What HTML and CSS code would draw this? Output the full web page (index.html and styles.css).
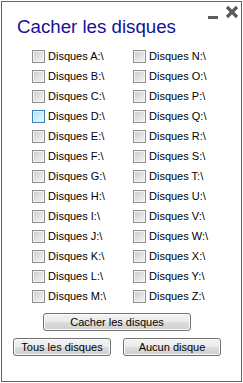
FILE: index.html
```html
<!DOCTYPE html>
<html lang="fr">
<head>
    <meta charset="UTF-8">
    <meta name="viewport" content="width=device-width, initial-scale=1.0">
    <title>Cacher les disques</title>
    <link rel="stylesheet" href="styles.css">
</head>
<body>
    <div class="window">
        <!-- Window controls -->
        <svg class="controls" width="34" height="16" viewBox="0 0 34 16">
            <rect x="3" y="11" width="10" height="3" fill="#5c5c5c"/>
            <path d="M22 2 L32 12 M32 2 L22 12" stroke="#5c5c5c" stroke-width="3.2"/>
        </svg>

        <h1 class="title">Cacher les disques</h1>

        <div class="drives">
            <label class="drive"><input type="checkbox"> Disques A:\</label>
            <label class="drive"><input type="checkbox"> Disques N:\</label>
            <label class="drive"><input type="checkbox"> Disques B:\</label>
            <label class="drive"><input type="checkbox"> Disques O:\</label>
            <label class="drive"><input type="checkbox"> Disques C:\</label>
            <label class="drive"><input type="checkbox"> Disques P:\</label>
            <label class="drive"><input type="checkbox" class="hover"> Disques D:\</label>
            <label class="drive"><input type="checkbox"> Disques Q:\</label>
            <label class="drive"><input type="checkbox"> Disques E:\</label>
            <label class="drive"><input type="checkbox"> Disques R:\</label>
            <label class="drive"><input type="checkbox"> Disques F:\</label>
            <label class="drive"><input type="checkbox"> Disques S:\</label>
            <label class="drive"><input type="checkbox"> Disques G:\</label>
            <label class="drive"><input type="checkbox"> Disques T:\</label>
            <label class="drive"><input type="checkbox"> Disques H:\</label>
            <label class="drive"><input type="checkbox"> Disques U:\</label>
            <label class="drive"><input type="checkbox"> Disques I:\</label>
            <label class="drive"><input type="checkbox"> Disques V:\</label>
            <label class="drive"><input type="checkbox"> Disques J:\</label>
            <label class="drive"><input type="checkbox"> Disques W:\</label>
            <label class="drive"><input type="checkbox"> Disques K:\</label>
            <label class="drive"><input type="checkbox"> Disques X:\</label>
            <label class="drive"><input type="checkbox"> Disques L:\</label>
            <label class="drive"><input type="checkbox"> Disques Y:\</label>
            <label class="drive"><input type="checkbox"> Disques M:\</label>
            <label class="drive"><input type="checkbox"> Disques Z:\</label>
        </div>

        <div class="actions">
            <button class="btn btn-wide">Cacher les disques</button>
            <div class="btn-row">
                <button class="btn">Tous les disques</button>
                <button class="btn">Aucun disque</button>
            </div>
        </div>
    </div>
</body>
</html>
```

FILE: styles.css
```css
body {
    margin: 0;
    background: #fff;
    font-family: "Liberation Sans", Arial, sans-serif;
}
.window {
    position: relative;
    box-sizing: border-box;
    width: 241px;
    height: 381px;
    margin: 1px 0 0 1px;
    border: 1px solid #646464;
    background: #fff;
    padding-top: 14px;
}
.controls {
    position: absolute;
    top: 3px;
    right: 2px;
}
.title {
    margin: 0 0 8px 15px;
    font-size: 18.7px;
    line-height: 22px;
    font-weight: normal;
    color: #12129a;
}
.drives {
    display: grid;
    grid-template-columns: 101px 101px;
    padding-left: 30px;
}
.drive {
    display: flex;
    align-items: center;
    height: 20px;
    font-size: 11px;
    color: #000;
    white-space: nowrap;
}
.drive input {
    appearance: none;
    -webkit-appearance: none;
    box-sizing: border-box;
    width: 13px;
    height: 13px;
    margin: 0 3px 0 0;
    border: 1px solid #8e8f8f;
    box-shadow: inset 0 0 0 1px #f4f4f4;
    background: linear-gradient(135deg, #cbcbcb, #f6f6f6);
}
.drive input.hover {
    border-color: #3c7fb1;
    box-shadow: inset 0 0 0 1px #def4fe;
    background: linear-gradient(135deg, #b1dffd, #e9f7fe);
}
.actions {
    width: 208px;
    margin: 7px 0 0 11px;
    display: flex;
    flex-direction: column;
    align-items: center;
    gap: 7px;
}
.btn-row {
    display: flex;
    gap: 12px;
}
.btn {
    box-sizing: border-box;
    width: 98px;
    height: 18px;
    padding: 0;
    font-family: "Liberation Sans", Arial, sans-serif;
    font-size: 11px;
    color: #000;
    border: 1px solid #707070;
    border-radius: 3px;
    background: linear-gradient(#f2f2f2 0%, #ebebeb 50%, #dddddd 50%, #cfcfcf 100%);
    box-shadow: inset 0 0 0 1px #fcfcfc;
}
.btn-wide {
    width: 148px;
}
```
